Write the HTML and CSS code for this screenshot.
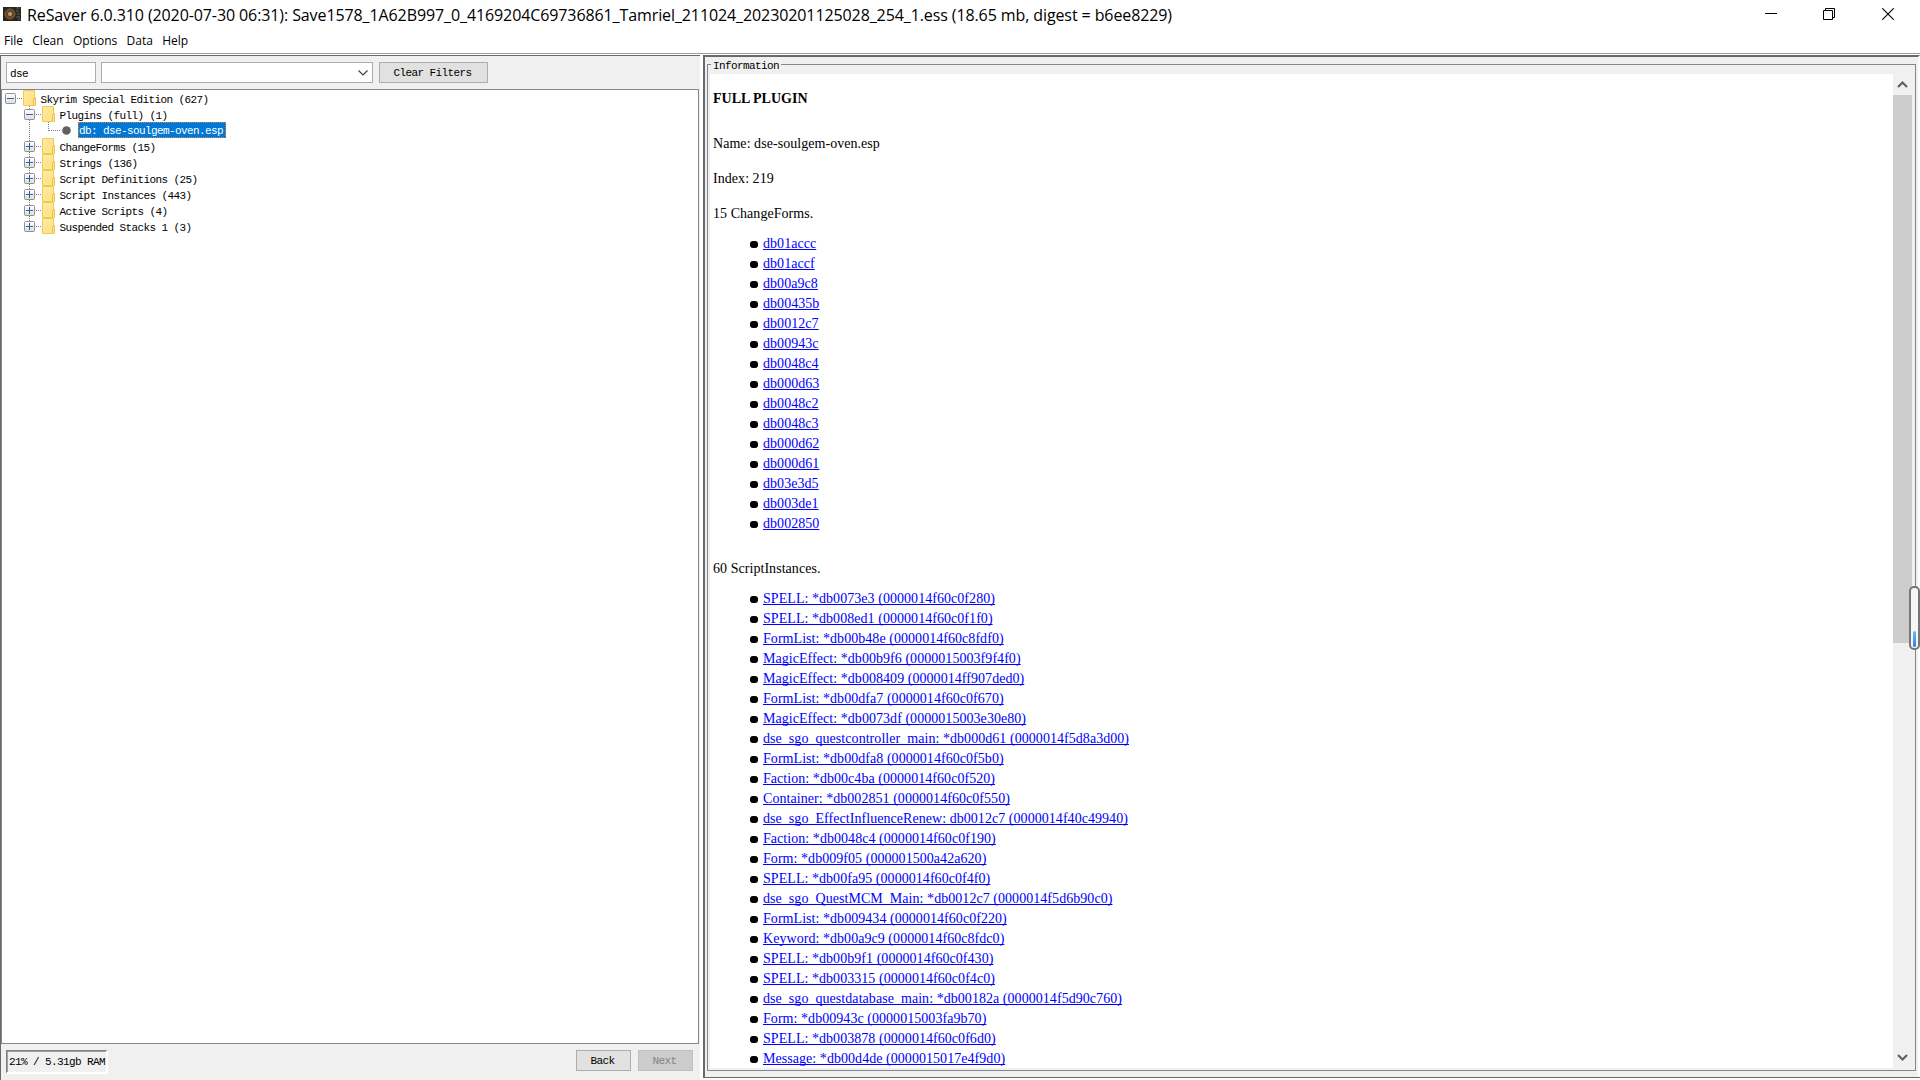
FILE: index.html
```html
<!DOCTYPE html>
<html lang="en">
<head>
<meta charset="utf-8">
<title>ReSaver</title>
<link rel="stylesheet" href="styles.css">
</head>
<body>
<svg class="defs" width="0" height="0">
  <defs>
    <linearGradient id="fg" x1="0" y1="0" x2="1" y2="1"><stop offset="0" stop-color="#ffeba6"/><stop offset="1" stop-color="#ffdf7c"/></linearGradient>
    <linearGradient id="bg" x1="0" y1="0" x2="0" y2="1"><stop offset="0" stop-color="#fff"/><stop offset="1" stop-color="#dcdcdc"/></linearGradient>
    <symbol id="folder" viewBox="0 0 14 16"><path d="M.5.5h11v7h1v8h-12z" fill="url(#fg)" stroke="#f0cb54"/><path d="M10.500 15V8.500h2V15" fill="#ffe9a0" stroke="#e8c14a"/></symbol>
    <symbol id="box" viewBox="0 0 11 11"><rect x=".5" y=".5" width="10" height="10" rx="1" fill="url(#bg)" stroke="#919191"/><path d="M2 5.500h7" stroke="#3c5aa8"/></symbol>
    <symbol id="minus" viewBox="0 0 19 16"><use href="#box" y="3" width="11" height="11"/><path d="M12 8.500h5" stroke="#808080" stroke-dasharray="1 1"/></symbol>
    <symbol id="minus2" viewBox="0 0 19 16"><path d="M5.500 0v16" stroke="#808080" stroke-dasharray="1 1"/><use href="#minus" width="19" height="16"/></symbol>
    <symbol id="plus" viewBox="0 0 19 16"><use href="#minus2" width="19" height="16"/><path d="M5.500 5v7" stroke="#3c5aa8"/></symbol>
    <symbol id="plusend" viewBox="0 0 19 16"><path d="M5.500 0v3" stroke="#808080" stroke-dasharray="1 1"/><use href="#minus" width="19" height="16"/><path d="M5.500 5v7" stroke="#3c5aa8"/></symbol>
  </defs>
</svg>
<div class="window">
  <header class="titlebar">
    <svg class="appicon" width="18" height="14" viewBox="0 0 18 14"><path fill="#292622" d="M0 0h18v14H0z"/><circle cx="7" cy="7" r="5" fill="#684326" stroke="#83603f"/><circle cx="7" cy="7" r="2" fill="#b69c7d"/><path d="M13 1h4M13 4h3M14 7h3M13 10h4M15 12h2" stroke="#625d55"/></svg>
    <h1 class="caption">ReSaver 6.0.310 (2020-07-30 06:31): Save1578_1A62B997_0_4169204C69736861_Tamriel_211024_20230201125028_254_1.ess (18.65 mb, digest = b6ee8229)</h1>
    <div class="controls">
      <svg width="12" height="12"><path d="M0 5.500h12" stroke="#000"/></svg>
      <svg width="12" height="12"><path d="M.5 2.500h9v9h-9zM2.500 2V.5h9v9H10" fill="none" stroke="#000"/></svg>
      <svg class="close" width="12" height="12"><path d="M.3.3l11.400 11.400M11.700.3L.3 11.700" stroke="#000" stroke-width="1.100"/></svg>
    </div>
  </header>
  <nav class="menu"><span>File</span><span>Clean</span><span>Options</span><span>Data</span><span>Help</span></nav>
  <main class="split">
    <section class="left">
      <div class="filters">
        <div class="field">dse</div>
        <div class="combo"><svg width="10" height="6"><path d="M.5.5L5 5 9.500.5" fill="none" stroke="#404040" stroke-width="1.200"/></svg></div>
        <div class="button clear">Clear Filters</div>
      </div>
      <div class="tree">
        <div class="row"><svg class="tog"><use href="#minus"/></svg><svg class="ico"><use href="#folder"/></svg><span>Skyrim Special Edition (627)</span></div>
        <div class="row sub"><svg class="tog"><use href="#minus2"/></svg><svg class="ico"><use href="#folder"/></svg><span>Plugins (full) (1)</span></div>
        <div class="row sub"><svg class="leaf" width="54" height="16"><path d="M5.500 0v16M24.500 0v9M25 8.500h11" fill="none" stroke="#808080" stroke-dasharray="1 1"/><circle cx="42.500" cy="8.500" r="4.300" fill="#606060"/></svg><span class="selected">db: dse-soulgem-oven.esp</span></div>
        <div class="row sub"><svg class="tog"><use href="#plus"/></svg><svg class="ico"><use href="#folder"/></svg><span>ChangeForms (15)</span></div>
        <div class="row sub"><svg class="tog"><use href="#plus"/></svg><svg class="ico"><use href="#folder"/></svg><span>Strings (136)</span></div>
        <div class="row sub"><svg class="tog"><use href="#plus"/></svg><svg class="ico"><use href="#folder"/></svg><span>Script Definitions (25)</span></div>
        <div class="row sub"><svg class="tog"><use href="#plus"/></svg><svg class="ico"><use href="#folder"/></svg><span>Script Instances (443)</span></div>
        <div class="row sub"><svg class="tog"><use href="#plus"/></svg><svg class="ico"><use href="#folder"/></svg><span>Active Scripts (4)</span></div>
        <div class="row sub"><svg class="tog"><use href="#plusend"/></svg><svg class="ico"><use href="#folder"/></svg><span>Suspended Stacks 1 (3)</span></div>
      </div>
      <footer class="status"><div class="memory">21% / 5.31gb RAM</div><div class="nav"><div class="button">Back</div><div class="button disabled">Next</div></div></footer>
    </section>
    <section class="right">
      <div class="group">
        <div class="legend">Information</div>
        <div class="view">
          <article class="doc">
            <h2>FULL PLUGIN</h2>
            <p>Name: dse-soulgem-oven.esp</p>
            <p>Index: 219</p>
            <p>15 ChangeForms.</p>
            <ul>
              <li><a>db01accc</a></li><li><a>db01accf</a></li><li><a>db00a9c8</a></li><li><a>db00435b</a></li><li><a>db0012c7</a></li>
              <li><a>db00943c</a></li><li><a>db0048c4</a></li><li><a>db000d63</a></li><li><a>db0048c2</a></li><li><a>db0048c3</a></li>
              <li><a>db000d62</a></li><li><a>db000d61</a></li><li><a>db03e3d5</a></li><li><a>db003de1</a></li><li><a>db002850</a></li>
            </ul>
            <p>60 ScriptInstances.</p>
            <ul>
              <li><a>SPELL: *db0073e3 (0000014f60c0f280)</a></li>
              <li><a>SPELL: *db008ed1 (0000014f60c0f1f0)</a></li>
              <li><a>FormList: *db00b48e (0000014f60c8fdf0)</a></li>
              <li><a>MagicEffect: *db00b9f6 (0000015003f9f4f0)</a></li>
              <li><a>MagicEffect: *db008409 (0000014ff907ded0)</a></li>
              <li><a>FormList: *db00dfa7 (0000014f60c0f670)</a></li>
              <li><a>MagicEffect: *db0073df (0000015003e30e80)</a></li>
              <li><a>dse_sgo_questcontroller_main: *db000d61 (0000014f5d8a3d00)</a></li>
              <li><a>FormList: *db00dfa8 (0000014f60c0f5b0)</a></li>
              <li><a>Faction: *db00c4ba (0000014f60c0f520)</a></li>
              <li><a>Container: *db002851 (0000014f60c0f550)</a></li>
              <li><a>dse_sgo_EffectInfluenceRenew: db0012c7 (0000014f40c49940)</a></li>
              <li><a>Faction: *db0048c4 (0000014f60c0f190)</a></li>
              <li><a>Form: *db009f05 (000001500a42a620)</a></li>
              <li><a>SPELL: *db00fa95 (0000014f60c0f4f0)</a></li>
              <li><a>dse_sgo_QuestMCM_Main: *db0012c7 (0000014f5d6b90c0)</a></li>
              <li><a>FormList: *db009434 (0000014f60c0f220)</a></li>
              <li><a>Keyword: *db00a9c9 (0000014f60c8fdc0)</a></li>
              <li><a>SPELL: *db00b9f1 (0000014f60c0f430)</a></li>
              <li><a>SPELL: *db003315 (0000014f60c0f4c0)</a></li>
              <li><a>dse_sgo_questdatabase_main: *db00182a (0000014f5d90c760)</a></li>
              <li><a>Form: *db00943c (0000015003fa9b70)</a></li>
              <li><a>SPELL: *db003878 (0000014f60c0f6d0)</a></li>
              <li><a>Message: *db00d4de (0000015017e4f9d0)</a></li>
            </ul>
          </article>
          <div class="scrollbar">
            <svg width="19" height="21"><path d="M5 13l4.500-4.500L14 13" fill="none" stroke="#606060" stroke-width="2.200"/></svg>
            <div class="thumb"></div>
            <svg class="down" width="19" height="21"><path d="M5 8l4.500 4.500L14 8" fill="none" stroke="#606060" stroke-width="2.200"/></svg>
          </div>
        </div>
      </div>
    </section>
  </main>
  <div class="gauge"><div class="level"></div></div>
</div>
</body>
</html>
```
FILE: styles.css
```css
* { box-sizing: border-box; }
body { margin: 0; background: #fff; color: #000; }
svg { display: block; flex: none; }
.defs { position: absolute; }
.window { position: relative; width: 1920px; height: 1080px; overflow: hidden; display: flex; flex-direction: column; }
.titlebar { height: 28px; display: flex; align-items: center; padding: 0 22px 0 3px; flex: none; }
.caption { margin: 0 0 0 6px; flex: 1; font: 16px/28px "Open Sans", "Noto Sans", sans-serif; letter-spacing: -0.1px; white-space: nowrap; padding-top: 1px; }
.controls { display: flex; gap: 46px; margin-right: 4px; }
.close { margin-left: 1px; }
.menu { height: 25px; display: flex; gap: 9.3px; padding-left: 4px; font: 12px/26px "Open Sans", "Noto Sans", sans-serif; flex: none; }
.split { flex: 1; min-height: 0; display: flex; gap: 3px; border-top: 1px solid #a0a0a0; padding-top: 1px; }
.left { width: 700px; background: #f0f0f0; border-top: 1px solid #696969; border-left: 1px solid #696969; display: flex; flex-direction: column; font: 11px/16px "Liberation Mono", monospace; letter-spacing: -0.6px; white-space: nowrap; }
.filters { height: 33px; padding: 6px 0 0 5px; display: flex; flex: none; }
.field, .combo { height: 21px; border: 1px solid #abadb3; background: #fff; }
.field { width: 90px; padding: 3px 3px; margin-right: 5px; }
.combo { width: 272px; display: flex; justify-content: flex-end; align-items: center; padding-right: 4px; margin-right: 6px; }
.button { width: 55px; height: 21px; border: 1px solid #adadad; background: #e1e1e1; text-align: center; line-height: 21px; padding-right: 2px; }
.clear { width: 109px; }
.disabled { background: #ccc; border-color: #bfbfbf; color: #838383; }
.tree { flex: 1; width: 698px; border: 1px solid #828790; background: #fff; }
.row { height: 16px; display: flex; padding-left: 3px; line-height: 20px; }
.sub { padding-left: 22px; }
.tog { width: 19px; height: 16px; margin-right: -1px; }
.ico { width: 14px; height: 16px; margin-right: 3.6px; }
.selected { width: 148px; height: 16px; line-height: 17px; background: #0078d7; color: #fff; border: 1px dotted #e08030; }
.status { height: 36px; padding: 6px 7px 0 5px; display: flex; justify-content: space-between; flex: none; }
.memory { width: 102px; height: 24px; border: 1px solid #808080; border-right: 2px solid #fff; border-bottom: 2px solid #fff; box-shadow: inset 1px 1px #a0a0a0; padding-left: 2px; line-height: 23px; }
.nav { display: flex; gap: 7px; }
.right { flex: 1; background: #f0f0f0; height: 1022px; border: 2px solid #696969; border-right: 2px solid #fff; border-bottom: 0; padding: 7px 2px 0 2px; box-shadow: 0 1px #696969; }
.group { height: 1007px; border: 1px solid #828790; padding: 9px 3px 2px 2px; }
.legend { width: 70px; height: 12px; margin: -15px 0 3px 1px; background: #f0f0f0; padding-left: 2px; font: 11px/14px "Liberation Mono", monospace; letter-spacing: -0.6px; }
.view { height: 994px; display: flex; overflow: hidden; background: #fff; }
.doc { flex: 1; padding: 15px 3px 0; font: 14px/20px "Liberation Serif", serif; letter-spacing: 0.05px; white-space: nowrap; }
.doc h2 { font-size: 14px; line-height: 20px; letter-spacing: 0; margin: 0 0 25px; }
.doc p { margin: 0 0 15px; }
.doc ul { list-style: none; margin: -5px 0 25px; padding: 0 0 0 37px; }
.doc li { display: flex; align-items: center; height: 20px; }
.doc li::before { content: ""; width: 8px; height: 7px; border-radius: 3px; background: #000; margin: 1px 5px 0 0; }
.doc a { color: #00f; text-decoration: underline; text-decoration-skip-ink: none; }
.scrollbar { width: 19px; background: #f0f0f0; display: flex; flex-direction: column; }
.thumb { height: 548px; background: #cdcdcd; }
.down { margin-top: auto; }
.gauge { position: absolute; left: 1909px; top: 586px; width: 11px; height: 64px; border: 2px solid #777; border-radius: 5px; background: #f6f6f6; padding: 43px 2px 0; }
.level { height: 16px; border-radius: 2px; background: linear-gradient(#62bcff, #2d80ef); }
```
